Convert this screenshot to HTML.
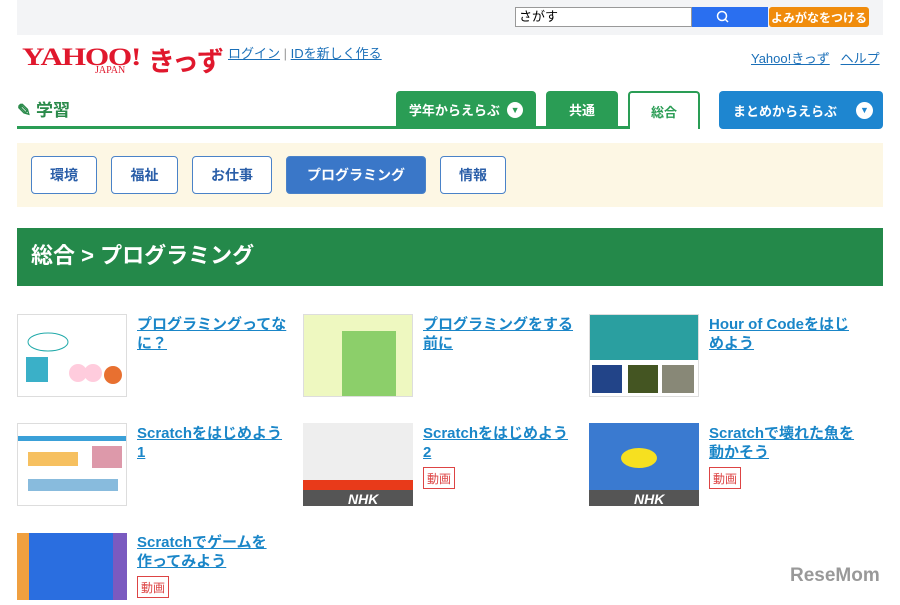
<!DOCTYPE html><html><head><meta charset="utf-8"><style>
body{margin:0;width:900px;height:600px;overflow:hidden;background:#fff;font-family:"Liberation Sans","Noto Sans CJK JP",sans-serif;position:relative}
.a{position:absolute}
.topbar{left:17px;top:0;width:866px;height:35px;background:#f3f4f6}
.btn{position:absolute;box-sizing:border-box;display:flex;align-items:center;justify-content:center;font-weight:bold;font-size:13px}
.cat{top:156px;height:38px;border:1px solid #4a82c8;border-radius:4px;background:#fff;color:#2a5ea8;font-size:14px}
.th{position:absolute;width:110px;height:83px;box-sizing:border-box;border:1px solid #ddd}
.t{position:absolute;color:#1a86c8;font-weight:bold;font-size:15px;line-height:19px;text-decoration:underline;width:160px;white-space:nowrap}
.mv{position:absolute;border:1px solid #d44;color:#d44;font-size:12px;width:32px;height:22px;box-sizing:border-box;display:flex;align-items:center;justify-content:center}
</style></head><body>
<div class="a topbar"></div>
<div class="a" style="left:515px;top:7px;width:177px;height:20px;box-sizing:border-box;border:1px solid #999;background:#fff;font-size:13px;padding-left:3px;line-height:18px">さがす</div>
<div class="a" style="left:692px;top:7px;width:76px;height:20px;background:#2a6ff0"><svg width="76" height="20"><circle cx="30" cy="9" r="4.5" fill="none" stroke="#fff" stroke-width="1.5"/><line x1="33" y1="12" x2="36" y2="15" stroke="#fff" stroke-width="1.5"/></svg></div>
<div class="btn" style="left:769px;top:7px;width:100px;height:20px;background:#f08c0c;color:#fff;border-radius:3px;font-size:12px">よみがなをつける</div>
<div class="a" style="left:22px;top:44px;font-family:'Liberation Serif',serif;color:#e0182d;font-size:25px;font-weight:bold;letter-spacing:-1px;transform:scaleX(1.25);transform-origin:left">YAHOO!</div>
<div class="a" style="left:95px;top:65px;font-family:'Liberation Serif',serif;color:#e0182d;font-size:10px">JAPAN</div>
<div class="a" style="left:148px;top:40px;color:#e0182d;font-size:27px;font-weight:bold;letter-spacing:-2px">きっず</div>
<div class="a" style="left:228px;top:43px;font-size:13px;color:#1a6fb8"><u>ログイン</u> <span style="color:#999">|</span> <u>IDを新しく作る</u></div>
<div class="a" style="left:751px;top:48px;font-size:13px;color:#1a6fb8"><u>Yahoo!きっず</u>&nbsp;&nbsp;&nbsp;<u>ヘルプ</u></div>
<div class="a" style="left:17px;top:96px;font-size:17px;font-weight:bold;color:#2a8a4a">✎ 学習</div>
<div class="a" style="left:17px;top:126px;width:683px;height:3px;background:#2a9d55"></div>
<div class="btn" style="left:396px;top:91px;width:140px;height:37px;background:#2a9d55;color:#fff;border-radius:4px 4px 0 0">学年からえらぶ&nbsp;&nbsp;<span style="display:inline-block;width:16px;height:16px;border-radius:50%;background:#fff;color:#2a9d55;font-size:9px;line-height:16px;text-align:center">▼</span></div>
<div class="btn" style="left:546px;top:91px;width:72px;height:37px;background:#2a9d55;color:#fff;border-radius:4px 4px 0 0">共通</div>
<div class="btn" style="left:628px;top:91px;width:72px;height:38px;background:#fff;color:#2a9d55;border:2px solid #2a9d55;border-bottom:none;border-radius:4px 4px 0 0">総合</div>
<div class="btn" style="left:719px;top:91px;width:164px;height:38px;background:#1e86d0;color:#fff;border-radius:4px;justify-content:space-between;padding:0 10px 0 14px">まとめからえらぶ<span style="display:inline-block;width:17px;height:17px;border-radius:50%;background:#fff;color:#1e86d0;font-size:9px;line-height:17px;text-align:center">▼</span></div>
<div class="a" style="left:17px;top:143px;width:866px;height:64px;background:#fdf7e4"></div>
<div class="btn cat" style="left:31px;width:66px">環境</div>
<div class="btn cat" style="left:111px;width:67px">福祉</div>
<div class="btn cat" style="left:192px;width:80px">お仕事</div>
<div class="btn cat" style="left:286px;width:140px;background:#3a77c8;color:#fff">プログラミング</div>
<div class="btn cat" style="left:440px;width:66px">情報</div>
<div class="a" style="left:17px;top:228px;width:866px;height:58px;background:#24894a;color:#fff;font-size:22px;font-weight:bold;line-height:56px;padding-left:14px;box-sizing:border-box">総合 &gt; プログラミング</div>

<div class="th" style="left:17px;top:314px;background:#fff"><svg width="108" height="81"><ellipse cx="30" cy="27" rx="20" ry="9" fill="none" stroke="#2aa" /><rect x="8" y="42" width="22" height="25" fill="#3ab0c8"/><circle cx="60" cy="58" r="9" fill="#fcd"/><circle cx="75" cy="58" r="9" fill="#fcd"/><circle cx="95" cy="60" r="9" fill="#e87030"/></svg></div>
<div class="t" style="left:137px;top:315px">プログラミングってな<br>に？</div>
<div class="th" style="left:303px;top:314px;background:#eef8c0"><svg width="108" height="81"><rect x="38" y="16" width="54" height="65" fill="#8ccf6a"/></svg></div>
<div class="t" style="left:423px;top:315px">プログラミングをする<br>前に</div>
<div class="th" style="left:589px;top:314px;background:#fff"><svg width="108" height="81"><rect x="0" y="0" width="108" height="45" fill="#2a9fa0"/><rect x="2" y="50" width="30" height="28" fill="#248"/><rect x="38" y="50" width="30" height="28" fill="#452"/><rect x="72" y="50" width="32" height="28" fill="#887"/></svg></div>
<div class="t" style="left:709px;top:315px">Hour of Codeをはじ<br>めよう</div>

<div class="th" style="left:17px;top:423px;background:#fff"><svg width="108" height="81"><rect x="0" y="12" width="108" height="5" fill="#3aa0d8"/><rect x="10" y="28" width="50" height="14" fill="#f6c060"/><rect x="74" y="22" width="30" height="22" fill="#d9a"/><rect x="10" y="55" width="90" height="12" fill="#8bd"/></svg></div>
<div class="t" style="left:137px;top:424px">Scratchをはじめよう<br>1</div>
<div class="th" style="left:303px;top:423px;background:#fff;border:none"><svg width="110" height="83"><rect width="110" height="83" fill="#eee"/><rect y="57" width="110" height="10" fill="#e83a1a"/><rect y="67" width="110" height="16" fill="#555"/><text x="45" y="81" fill="#fff" font-size="14" font-weight="bold" font-style="italic" font-family="Liberation Sans">NHK</text></svg></div>
<div class="t" style="left:423px;top:424px">Scratchをはじめよう<br>2</div>
<div class="mv" style="left:423px;top:467px">動画</div>
<div class="th" style="left:589px;top:423px;border:none"><svg width="110" height="83"><rect width="110" height="67" fill="#3a7ad0"/><ellipse cx="50" cy="35" rx="18" ry="10" fill="#f6e020"/><rect y="67" width="110" height="16" fill="#555"/><text x="45" y="81" fill="#fff" font-size="14" font-weight="bold" font-style="italic" font-family="Liberation Sans">NHK</text></svg></div>
<div class="t" style="left:709px;top:424px">Scratchで壊れた魚を<br>動かそう</div>
<div class="mv" style="left:709px;top:467px">動画</div>

<div class="th" style="left:17px;top:533px;border:none;height:67px"><svg width="110" height="67"><rect width="110" height="67" fill="#2a6ee0"/><rect x="0" y="0" width="12" height="67" fill="#f0a040"/><rect x="96" y="0" width="14" height="67" fill="#7a5ac0"/></svg></div>
<div class="t" style="left:137px;top:533px">Scratchでゲームを<br>作ってみよう</div>
<div class="mv" style="left:137px;top:576px">動画</div>
<div class="a" style="left:790px;top:565px;font-size:19px;font-weight:bold;color:#999">ReseMom</div>
</body></html>
